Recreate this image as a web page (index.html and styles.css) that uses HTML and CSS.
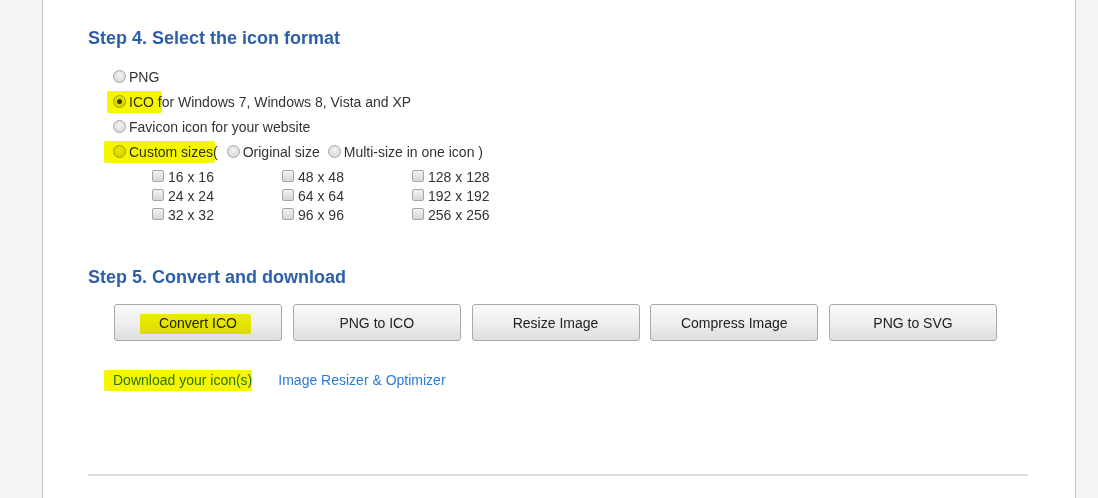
FILE: index.html
```html
<!DOCTYPE html>
<html>
<head>
<meta charset="utf-8">
<link rel="stylesheet" href="styles.css">
</head>
<body>
<div class="panel">
  <h2 class="step">Step 4. Select the icon format</h2>
  <div class="formats">
    <div class="row"><span class="radio"></span><span>PNG</span></div>
    <div class="row"><span class="radio checked"></span><span>ICO for Windows 7, Windows 8, Vista and XP</span><span class="hl hl-ico"></span></div>
    <div class="row"><span class="radio"></span><span>Favicon icon for your website</span></div>
    <div class="row"><span class="radio"></span><span>Custom sizes(</span><span class="radio sub"></span><span>Original size</span><span class="radio sub2"></span><span>Multi-size in one icon )</span><span class="hl hl-custom"></span></div>
  </div>
  <div class="sizes">
    <div class="cb"><span class="box"></span>16 x 16</div>
    <div class="cb"><span class="box"></span>48 x 48</div>
    <div class="cb"><span class="box"></span>128 x 128</div>
    <div class="cb"><span class="box"></span>24 x 24</div>
    <div class="cb"><span class="box"></span>64 x 64</div>
    <div class="cb"><span class="box"></span>192 x 192</div>
    <div class="cb"><span class="box"></span>32 x 32</div>
    <div class="cb"><span class="box"></span>96 x 96</div>
    <div class="cb"><span class="box"></span>256 x 256</div>
  </div>
  <h2 class="step step5">Step 5. Convert and download</h2>
  <div class="buttons">
    <div class="btn">Convert ICO<span class="hl hl-convert"></span></div>
    <div class="btn">PNG to ICO</div>
    <div class="btn">Resize Image</div>
    <div class="btn">Compress Image</div>
    <div class="btn">PNG to SVG</div>
  </div>
  <div class="links">
    <a class="link dl">Download your icon(s)<span class="hl hl-dl"></span></a>
    <a class="link">Image Resizer &amp; Optimizer</a>
  </div>
  <hr class="rule">
</div>
</body>
</html>
```
FILE: styles.css
```css
html, body {
  margin: 0;
  padding: 0;
  height: 100%;
  background: #f5f5f5;
  font-family: Arial, "Liberation Sans", sans-serif;
}
.panel {
  margin-left: 42px;
  width: 1034px;
  min-height: 498px;
  box-sizing: border-box;
  background: #fff;
  border-left: 1px solid #c4c4c4;
  border-right: 1px solid #c4c4c4;
  padding: 27px 47px 0 45px;
}
.step {
  margin: 0;
  font-size: 18px;
  line-height: 22px;
  font-weight: bold;
  color: #2f5ea8;
}
.formats {
  margin-top: 15px;
  padding-left: 25px;
}
.row {
  position: relative;
  display: flex;
  align-items: center;
  height: 25px;
  font-size: 14px;
  color: #333;
}
.radio {
  width: 11px;
  height: 11px;
  border: 1px solid #a6a6a6;
  border-radius: 50%;
  background: radial-gradient(circle at 50% 40%, #f4f4f4 0%, #dcdcdc 70%, #c8c8c8 100%);
  margin-right: 3px;
  position: relative;
  flex: none;
}
.radio.checked::after {
  content: "";
  position: absolute;
  left: 3px;
  top: 3px;
  width: 5px;
  height: 5px;
  border-radius: 50%;
  background: #3a3a3a;
}
.radio.sub { margin-left: 9px; }
.radio.sub2 { margin-left: 8px; }
.hl {
  position: absolute;
  background: #f6f600;
  mix-blend-mode: multiply;
  border-radius: 2px;
  pointer-events: none;
}
.hl-ico { left: -6px; top: 2px; width: 55px; height: 22px; }
.hl-custom { left: -9px; top: 2px; width: 111px; height: 22px; }
.sizes {
  display: grid;
  grid-template-columns: 130px 130px 130px;
  margin-top: 3.5px;
  padding-left: 64px;
}
.cb {
  display: flex;
  align-items: center;
  height: 19px;
  font-size: 14px;
  color: #333;
}
.box {
  width: 10px;
  height: 10px;
  border: 1px solid #a6a6a6;
  border-radius: 2px;
  background: linear-gradient(#f2f2f2, #d6d6d6);
  margin-right: 4px;
  margin-top: -2px;
}
.step5 { margin-top: 41px; }
.buttons {
  display: flex;
  gap: 10.75px;
  margin-top: 16.5px;
  padding-left: 26px;
}
.btn {
  position: relative;
  width: 168px;
  height: 37px;
  box-sizing: border-box;
  border: 1px solid #a8a8a8;
  border-radius: 3px;
  background: linear-gradient(#fafafa 0%, #f0f0f0 45%, #dedede 100%);
  display: flex;
  align-items: center;
  justify-content: center;
  font-size: 14px;
  color: #222;
}
.hl-convert { left: 25px; top: 9px; width: 111px; height: 20px; }
.links {
  display: flex;
  gap: 26px;
  margin-top: 30px;
  padding-left: 25px;
  height: 18px;
  align-items: center;
}
.link {
  position: relative;
  font-size: 14px;
  color: #2b7bd6;
  text-decoration: none;
}
.hl-dl { left: -9px; top: -2px; width: 148px; height: 21px; }
.rule {
  margin: 85px 0 0 0;
  border: 0;
  border-top: 2px solid #dcdcdc;
  height: 0;
}
```
